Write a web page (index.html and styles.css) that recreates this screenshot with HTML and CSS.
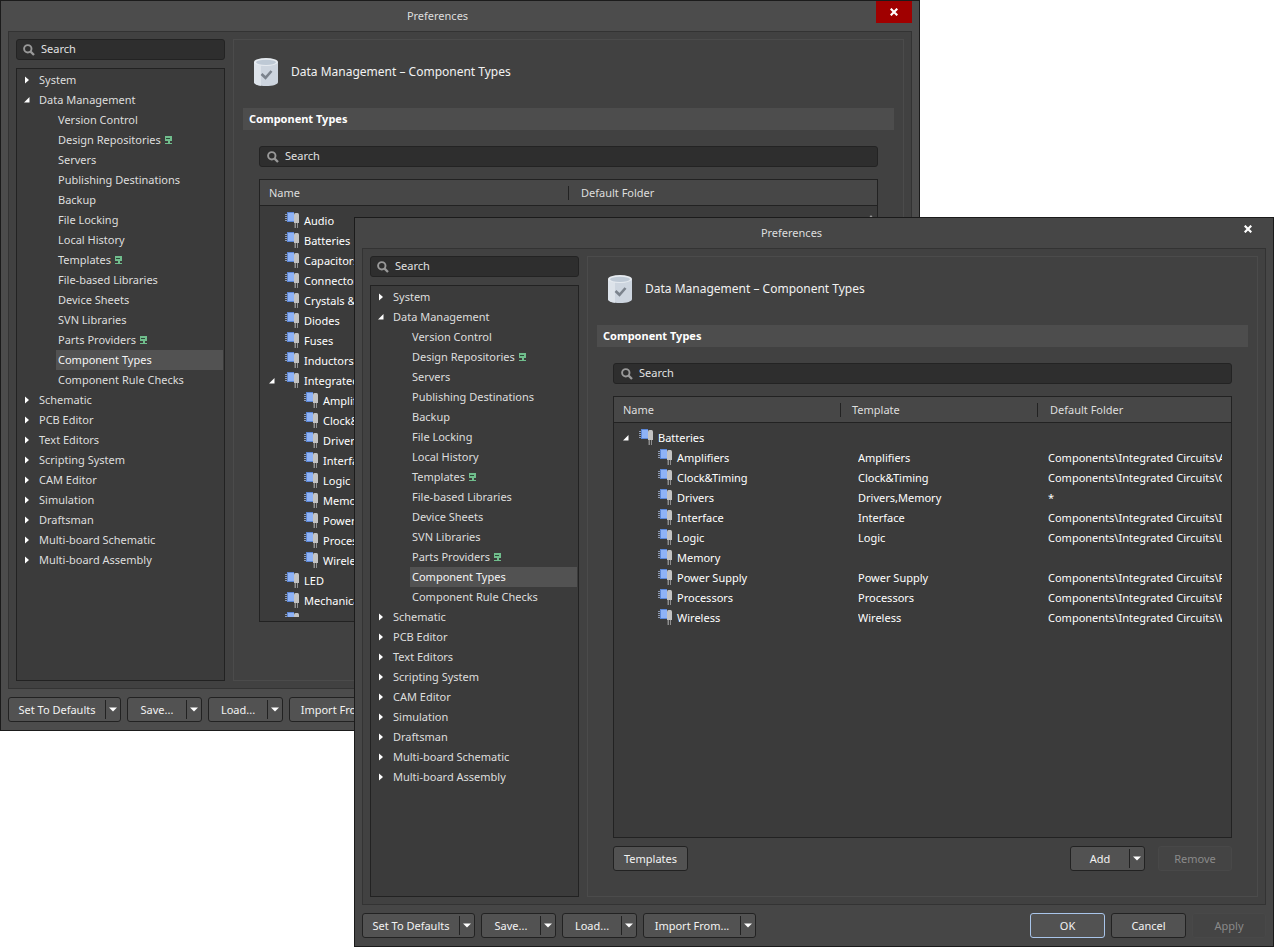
FILE: index.html
```html
<!DOCTYPE html>
<html lang="en">
<head>
    <meta charset="UTF-8">
    <meta name="viewport" content="width=device-width, initial-scale=1.0">
    <title>Preferences</title>
    <link rel="stylesheet" href="styles.css">
</head>
<body>
    <!-- shared icons -->
    <svg class="sprite" aria-hidden="true">
        <symbol id="icon-search" viewBox="0 0 12 12">
            <circle cx="4.8" cy="4.8" r="3.7" fill="none" stroke="#999" stroke-width="1.9"/>
            <path d="M7.6 7.6L11 11" stroke="#999" stroke-width="2.3"/>
        </symbol>
        <symbol id="icon-closed" viewBox="0 0 8 8">
            <path d="M1 0.5L5 4L1 7.5Z" fill="#fff"/>
        </symbol>
        <symbol id="icon-open" viewBox="0 0 8 8">
            <path d="M5.5 1V6.5H0Z" fill="#fff"/>
        </symbol>
        <symbol id="icon-down" viewBox="0 0 8 5">
            <path d="M0 0.5H8L4 4.5Z" fill="#fff"/>
        </symbol>
        <symbol id="icon-server" viewBox="0 0 8 8">
            <path d="M1 0H8V5H6V7H8V8H1V7H4V5H1Z" fill="#70bd8c"/>
            <path d="M2 2H6V3H2Z" fill="#2c4a38"/>
        </symbol>
        <symbol id="icon-part" viewBox="0 0 14 16">
            <path d="M0 2.5H3M0 4.5H3M0 6.5H3M0 8.5H3" stroke="#8f9bb3"/>
            <path d="M2 0H9V10H2Z" fill="#5b86d6"/>
            <path d="M3 1H9V9H3Z" fill="#8fb3f6"/>
            <path d="M9.5 10H11V16H9.5ZM12 10H13V16H12Z" fill="#8f8f8f"/>
            <path d="M9 3Q9 1 10.5 1H12.5Q14 1 14 3V11H9Z" fill="#c3c3c3"/>
        </symbol>
        <symbol id="icon-data" viewBox="0 0 24 28">
            <path d="M0 4V24C0 26.5 5 28 12 28S24 26.5 24 24V4Z" fill="#cdd5df"/>
            <path d="M0 4V24C0 26 3 27.3 7 27.7V6Z" fill="#dde3ea"/>
            <ellipse cx="12" cy="4" rx="12" ry="4" fill="#e6ebf0"/>
            <ellipse cx="12" cy="4.3" rx="10" ry="2.6" fill="#bec9d5"/>
            <path d="M7.5 16L11.5 19.8L17.5 13" fill="none" stroke="#7b838d" stroke-width="2.6"/>
        </symbol>
        <symbol id="icon-close" viewBox="0 0 8 8">
            <path d="M0.7 0.7L7.3 7.3M7.3 0.7L0.7 7.3" stroke="#fff" stroke-width="2.2"/>
        </symbol>
    </svg>

    <main class="desktop">
        <section class="window window-back">
            <header class="titlebar">
                <h1>Preferences</h1>
                <button class="close close-hot" aria-label="Close"><svg><use href="#icon-close"/></svg></button>
            </header>
            <div class="frame">
                <div class="sidebar">
                    <label class="search"><svg><use href="#icon-search"/></svg><input type="text" placeholder="Search" aria-label="Search preferences"></label>
                    <ul class="tree"></ul>
                </div>
                <div class="page">
                    <div class="page-title"><svg><use href="#icon-data"/></svg><h2>Data Management – Component Types</h2></div>
                    <h3 class="section-title">Component Types</h3>
                    <div class="page-body">
                        <label class="search"><svg><use href="#icon-search"/></svg><input type="text" placeholder="Search" aria-label="Search component types"></label>
                        <div class="list">
                            <table>
                                <colgroup><col class="col-half"><col></colgroup>
                                <thead><tr><th>Name</th><th>Default Folder</th></tr></thead>
                                <tbody id="types-back"></tbody>
                            </table>
                            <span class="scroll-up"></span>
                        </div>
                        <div class="list-actions"></div>
                    </div>
                </div>
            </div>
            <footer class="actions">
                <div class="split split-wide"><button>Set To Defaults</button><button class="drop" aria-label="Defaults options"><svg><use href="#icon-down"/></svg></button></div>
                <div class="split"><button>Save...</button><button class="drop" aria-label="Save options"><svg><use href="#icon-down"/></svg></button></div>
                <div class="split"><button>Load...</button><button class="drop" aria-label="Load options"><svg><use href="#icon-down"/></svg></button></div>
                <div class="split split-wide"><button>Import From...</button><button class="drop" aria-label="Import options"><svg><use href="#icon-down"/></svg></button></div>
            </footer>
        </section>

        <section class="window window-front">
            <header class="titlebar">
                <h1>Preferences</h1>
                <button class="close" aria-label="Close"><svg><use href="#icon-close"/></svg></button>
            </header>
            <div class="frame">
                <div class="sidebar">
                    <label class="search"><svg><use href="#icon-search"/></svg><input type="text" placeholder="Search" aria-label="Search preferences"></label>
                    <ul class="tree"></ul>
                </div>
                <div class="page">
                    <div class="page-title"><svg><use href="#icon-data"/></svg><h2>Data Management – Component Types</h2></div>
                    <h3 class="section-title">Component Types</h3>
                    <div class="page-body">
                        <label class="search"><svg><use href="#icon-search"/></svg><input type="text" placeholder="Search" aria-label="Search component types"></label>
                        <div class="list">
                            <table>
                                <colgroup><col class="col-name"><col class="col-template"><col></colgroup>
                                <thead><tr><th>Name</th><th>Template</th><th>Default Folder</th></tr></thead>
                                <tbody id="types-front"></tbody>
                            </table>
                        </div>
                        <div class="list-actions">
                            <button class="btn">Templates</button>
                            <div class="split push"><button>Add</button><button class="drop" aria-label="Add options"><svg><use href="#icon-down"/></svg></button></div>
                            <button class="btn" disabled>Remove</button>
                        </div>
                    </div>
                </div>
            </div>
            <footer class="actions">
                <div class="split split-wide"><button>Set To Defaults</button><button class="drop" aria-label="Defaults options"><svg><use href="#icon-down"/></svg></button></div>
                <div class="split"><button>Save...</button><button class="drop" aria-label="Save options"><svg><use href="#icon-down"/></svg></button></div>
                <div class="split"><button>Load...</button><button class="drop" aria-label="Load options"><svg><use href="#icon-down"/></svg></button></div>
                <div class="split split-wide"><button>Import From...</button><button class="drop" aria-label="Import options"><svg><use href="#icon-down"/></svg></button></div>
                <button class="btn btn-default push">OK</button>
                <button class="btn">Cancel</button>
                <button class="btn" disabled>Apply</button>
            </footer>
        </section>
    </main>

    <script src="script.js"></script>
</body>
</html>
```
FILE: styles.css
```css
* {
    box-sizing: border-box;
}

body {
    margin: 0;
    background-color: #fff;
    color: #dedede;
    font: 11px/20px "Noto Sans", sans-serif;
}

h1, h2, h3, ul {
    margin: 0;
    padding: 0;
    font-size: 11px;
    font-weight: normal;
    list-style: none;
}

button, input {
    font: inherit;
    color: #f2f2f2;
}

button {
    padding: 0;
    border: none;
    background: none;
}

.sprite {
    display: none;
}

.desktop {
    position: relative;
    height: 100vh;
    min-height: 900px;
    overflow: hidden;
}

/* windows */
.window {
    position: absolute;
    display: flex;
    flex-direction: column;
    padding: 0 7px 8px;
    border: 1px solid #1b1b1b;
}

.window-back {
    top: 0;
    right: 361px;
    bottom: 217px;
    left: 0;
    background-color: #4c4c4c;
}

.window-front {
    top: 217px;
    right: 7px;
    bottom: 1px;
    left: 354px;
    background-color: #464646;
}

.titlebar {
    position: relative;
    height: 30px;
    text-align: center;
}

.titlebar h1 {
    line-height: 30px;
    padding-right: 45px;
}

.close {
    position: absolute;
    top: 0;
    right: 0;
    display: flex;
    align-items: center;
    justify-content: center;
    width: 36px;
    height: 22px;
}

.close svg {
    width: 8px;
    height: 8px;
}

.close-hot {
    background-color: #a00000;
}

.frame {
    flex: 1;
    min-height: 0;
    display: flex;
    gap: 8px;
    padding: 7px;
    border: 1px solid #333;
    background-color: #414141;
}

/* left side */
.sidebar {
    flex: none;
    width: 209px;
    display: flex;
    flex-direction: column;
    gap: 8px;
}

.search {
    flex: none;
    display: flex;
    align-items: center;
    height: 21px;
    padding-left: 7px;
    border: 1px solid #232323;
    border-radius: 3px;
    background-color: #2e2e2e;
}

.sidebar .search {
    padding-left: 6px;
}

.search svg {
    flex: none;
    width: 12px;
    height: 12px;
}

.search input {
    flex: 1;
    min-width: 0;
    padding: 0 6px 2px;
    border: none;
    outline: none;
    background: none;
}

.search input::placeholder {
    color: #e2e2e2;
    opacity: 1;
}

.tree {
    flex: 1;
    min-height: 0;
    padding-top: 1px;
    border: 1px solid #222;
    background-color: #3b3b3b;
    overflow: hidden;
}

.tree a {
    display: flex;
    align-items: center;
    height: 20px;
    padding-left: 7px;
    color: inherit;
    text-decoration: none;
}

.arrow {
    flex: none;
    width: 8px;
    height: 8px;
}

.tree .arrow {
    margin-right: 7px;
}

.tree ul a {
    margin: 0 1px 0 39px;
    padding-left: 2px;
}

.tree .selected {
    background-color: #525252;
    color: #f5f5f5;
}

.server {
    width: 8px;
    height: 8px;
    margin-left: 3px;
}

/* settings page */
.page {
    flex: 1;
    min-width: 0;
    display: flex;
    flex-direction: column;
    padding: 0 9px 9px;
    border: 1px solid #4b4b4b;
}

.page-title {
    display: flex;
    align-items: center;
    gap: 13px;
    height: 64px;
    padding-left: 11px;
}

.page-title svg {
    width: 24px;
    height: 28px;
}

.page-title h2 {
    font-size: 12px;
    color: #f2f2f2;
}

.section-title {
    margin-top: 4px;
    height: 22px;
    padding-left: 6px;
    background-color: #4d4d4d;
    color: #fff;
    font-weight: bold;
    line-height: 22px;
}

.page-body {
    flex: 1;
    min-height: 0;
    display: flex;
    flex-direction: column;
    padding: 16px 16px 0;
}

.list {
    position: relative;
    flex: 1;
    min-height: 0;
    margin: 12px 0 8px;
    border: 1px solid #222;
    background-color: #3b3b3b;
    overflow: hidden;
}

.list::after {
    content: "";
    position: absolute;
    right: 0;
    bottom: 0;
    left: 0;
    height: 4px;
    background-color: #3b3b3b;
}

.list table {
    width: 100%;
    table-layout: fixed;
    border-collapse: separate;
    border-spacing: 0;
}

.col-half {
    width: 308px;
}

.col-name {
    width: 226px;
}

.col-template {
    width: 197px;
}

.list th {
    height: 26px;
    padding: 0 0 0 12px;
    border-bottom: 1px solid #222;
    background: linear-gradient(#222, #222) left center / 1px 14px no-repeat #474747;
    font-weight: normal;
    text-align: left;
}

.list th:last-child {
    padding-left: 13px;
}

.list th:first-child {
    padding-left: 9px;
    background: #474747;
}

.list tbody::before {
    content: "";
    display: block;
    height: 5px;
}

.list td {
    height: 20px;
    padding: 0 9px 0 18px;
    color: #fff;
}

.list td:last-child {
    padding-left: 11px;
}

.list td:first-child {
    padding: 0;
}

.clip {
    overflow: hidden;
    white-space: nowrap;
}

.name {
    display: flex;
    align-items: center;
    height: 20px;
    padding-left: 25px;
}

.name .part {
    flex: none;
    width: 14px;
    height: 16px;
    margin: 0 5px 2px 0;
}

.name .arrow + .part {
    margin-left: 8px;
}

.name.open {
    padding-left: 9px;
}

.name.child {
    padding-left: 44px;
}

.scroll-up {
    position: absolute;
    top: 35px;
    right: 3px;
    border: 3px solid transparent;
    border-top: none;
    border-bottom: 4px solid #999;
}

/* buttons */
.list-actions {
    flex: none;
    display: flex;
    gap: 13px;
    height: 41px;
}

.actions {
    display: flex;
    gap: 6px;
    padding-top: 8px;
}

.push {
    margin-left: auto;
}

.btn, .split {
    flex: none;
    width: 75px;
    height: 25px;
    border: 1px solid #222;
    border-radius: 3px;
    background-color: #525252;
}

.btn:disabled {
    width: 74px;
    border-color: #484848;
    background-color: #444;
    color: #8a8a8a;
}

.btn-default {
    border-color: #a9c5ea;
}

.split {
    display: flex;
}

.split-wide {
    width: 113px;
}

.split button {
    flex: 1;
    white-space: nowrap;
}

.split .drop {
    flex: none;
    width: 15px;
    margin: 2px 0;
    border-left: 1px solid #222;
    line-height: 0;
}

.drop svg {
    width: 8px;
    height: 5px;
}
```
FILE: script.js
```javascript
const tree = [
    { name: 'System' },
    {
        name: 'Data Management',
        items: [
            'Version Control', 'Design Repositories', 'Servers', 'Publishing Destinations',
            'Backup', 'File Locking', 'Local History', 'Templates', 'File-based Libraries',
            'Device Sheets', 'SVN Libraries', 'Parts Providers', 'Component Types',
            'Component Rule Checks'
        ]
    },
    { name: 'Schematic' },
    { name: 'PCB Editor' },
    { name: 'Text Editors' },
    { name: 'Scripting System' },
    { name: 'CAM Editor' },
    { name: 'Simulation' },
    { name: 'Draftsman' },
    { name: 'Multi-board Schematic' },
    { name: 'Multi-board Assembly' }
];

// pages stored on the server
const serverPages = ['Design Repositories', 'Templates', 'Parts Providers'];
const selectedPage = 'Component Types';

const circuits = ['Amplifiers', 'Clock&Timing', 'Drivers', 'Interface', 'Logic', 'Memory',
    'Power Supply', 'Processors', 'Wireless'];

function escapeHtml(text) {
    return text.replace(/&/g, '&amp;');
}

function icon(id, className) {
    return `<svg class="${className}"><use href="#icon-${id}"/></svg>`;
}

function pageLink(name) {
    const selected = name === selectedPage ? ' class="selected"' : '';
    const server = serverPages.includes(name) ? icon('server', 'server') : '';
    return `<li><a href="#"${selected}>${name}${server}</a></li>`;
}

function renderTree() {
    return tree.map(group => {
        const arrow = icon(group.items ? 'open' : 'closed', 'arrow');
        const children = group.items ? `<ul>${group.items.map(pageLink).join('')}</ul>` : '';
        return `<li><a href="#">${arrow}${group.name}</a>${children}</li>`;
    }).join('');
}

function row(name, level, cells) {
    const arrow = level === 'open' ? icon('open', 'arrow') : '';
    const rest = cells.map(text => `<td><div class="clip">${escapeHtml(text)}</div></td>`).join('');
    return `<tr><td><div class="name ${level}">${arrow}${icon('part', 'part')}${escapeHtml(name)}</div></td>${rest}</tr>`;
}

document.querySelectorAll('.tree').forEach(el => {
    el.innerHTML = renderTree();
});

document.getElementById('types-back').innerHTML = [
    ...['Audio', 'Batteries', 'Capacitors', 'Connectors', 'Crystals & Oscillators', 'Diodes',
        'Fuses', 'Inductors'].map(name => row(name, '', [''])),
    row('Integrated Circuits', 'open', ['']),
    ...circuits.map(name => row(name, 'child', [''])),
    ...['LED', 'Mechanical', ''].map(name => row(name, '', ['']))
].join('');

document.getElementById('types-front').innerHTML = [
    row('Batteries', 'open', ['', '']),
    ...circuits.map(name => {
        if (name === 'Memory') return row(name, 'child', ['', '']);
        if (name === 'Drivers') return row(name, 'child', ['Drivers,Memory', '*']);
        return row(name, 'child', [name, 'Components\\Integrated Circuits\\' + name]);
    })
].join('');
```
